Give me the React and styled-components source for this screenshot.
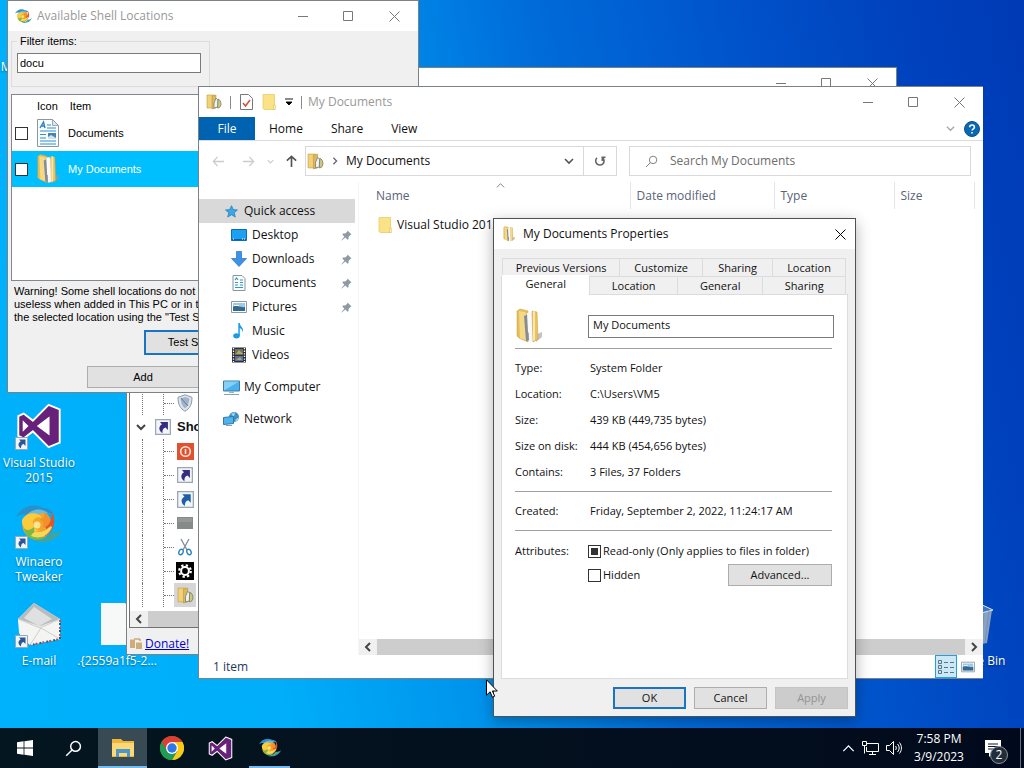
import { useEffect, useRef } from 'react';
import styled, { createGlobalStyle, css } from 'styled-components';

const GlobalStyle = createGlobalStyle`
  * {
    box-sizing: border-box;
  }
  body {
    margin: 0;
    overflow: hidden;
    font-family: 'Open Sans', 'Noto Sans', sans-serif;
    font-size: 12px;
    line-height: 16px;
    color: #111;
  }
  button, input {
    font: inherit;
    color: inherit;
    margin: 0;
    padding: 0;
  }
  button {
    border: 0;
    background: none;
  }
  ul, dl, dd, p, h2 {
    margin: 0;
    padding: 0;
    list-style: none;
  }
  svg {
    display: block;
    flex: none;
  }
`;

const Screen = styled.div`
  display: flex;
  flex-direction: column;
  height: 100vh;
  background: linear-gradient(78deg, #00b2fb 0%, #00aef9 25%, #0092ec 42%, #006cda 58%, #0052ca 76%, #0041bd 90%, #003ab4 100%);
`;

const Workspace = styled.main`
  position: relative;
  flex: 1;
  overflow: hidden;
`;

/* desktop shortcuts */

const Shortcuts = styled.div`
  display: grid;
  grid-template-rows: repeat(7, 99px);
  grid-auto-columns: 78px;
  padding-top: 6px;
`;
const Shortcut = styled.div`
  grid-row: ${p => p.$row};
  grid-column: ${p => p.$col || 1};
  display: flex;
  flex-direction: column;
  align-items: center;
  gap: 5px;
  line-height: 15px;
  color: white;
  text-align: center;
  text-shadow: 0 1px 2px rgba(0, 0, 0, .45);
  white-space: ${p => (p.$oneLine ? 'nowrap' : 'normal')};
`;
const ShortcutIcon = styled.div`
  position: relative;
  display: flex;
  justify-content: center;
  align-items: center;
  width: 48px;
  height: 48px;
`;
const LinkBadge = styled.div`
  position: absolute;
  left: 0;
  bottom: 0;
`;
const BinSlot = styled.div`
  position: absolute;
  right: 11px;
  top: 600px;
  width: 78px;
`;

/* windows */

const Window = styled.section`
  position: absolute;
  left: ${p => p.$left}px;
  top: ${p => p.$top}px;
  width: ${p => p.$width}px;
  height: ${p => p.$height}px;
  display: flex;
  flex-direction: column;
  background: ${p => p.$bg || 'white'};
  border: 1px solid ${p => p.$edge || '#7a8288'};
  border-width: ${p => p.$borders || '1px'};
  overflow: hidden;
  ${p => p.$active && 'box-shadow: 0 4px 14px rgba(0, 0, 0, .3);'}
`;
const TitleBar = styled.header`
  display: flex;
  align-items: center;
  height: 30px;
  flex: none;
  padding-left: 7px;
  background: white;
  color: ${p => (p.$active ? '#111' : '#999')};
`;
const Title = styled.h2`
  flex: 1;
  font-size: 12px;
  font-weight: normal;
  white-space: nowrap;
  padding-left: ${p => p.$gap || 6}px;
`;
const CaptionButton = styled.button`
  display: flex;
  align-items: center;
  justify-content: center;
  width: ${p => p.$width || 46}px;
  height: 30px;
`;

const ClassicBody = styled.div`
  font-family: 'Liberation Sans', Arial, sans-serif;
  font-size: 11px;
  line-height: 13px;
  color: black;
`;
const ClassicButton = styled.button`
  width: ${p => p.$width}px;
  height: ${p => p.$height || 22}px;
  background: #e1e1e1;
  border: ${p => (p.$primary ? '2px solid #1874c4' : '1px solid #adadad')};
  &:disabled {
    background: #ccc;
    border-color: #c4c4c4;
    color: #939393;
  }
`;
const Check = styled.input`
  appearance: none;
  display: grid;
  place-content: center;
  width: 13px;
  height: 13px;
  flex: none;
  background: white;
  border: 1px solid #333;
  &:indeterminate::before {
    content: '';
    width: 7px;
    height: 7px;
    background: #333;
  }
`;

/* shell locations */

const ShellBody = styled(ClassicBody)`
  display: flex;
  flex-direction: column;
  flex: 1;
  padding: 4px 3px 4px;
`;
const Filter = styled.fieldset`
  width: 199px;
  height: 52px;
  margin: 0;
  padding: 5px 5px 0;
  border: 1px solid #dcdcdc;
  legend {
    padding: 0 3px;
  }
  input {
    display: block;
    width: 184px;
    height: 20px;
    padding: 0 2px;
    border: 1px solid #7a7a7a;
    background: white;
  }
`;
const LocationList = styled.div`
  height: 187px;
  margin-top: 7px;
  border: 1px solid #828790;
  background: white;
`;
const LocationHead = styled.div`
  display: flex;
  height: 20px;
  align-items: center;
  padding: 2px 0 0 25px;
  gap: 12px;
`;
const LocationRow = styled.label`
  display: flex;
  align-items: center;
  gap: 8px;
  height: 36px;
  padding-left: 3px;
  background: ${p => (p.$selected ? '#00bfff' : 'white')};
  color: ${p => (p.$selected ? 'white' : 'black')};
`;
const Warning = styled.p`
  padding: 4px 3px 0;
  white-space: nowrap;
  span {
    display: block;
  }
`;
const TestRow = styled.div`
  display: flex;
  padding: 6px 0 0 133px;
`;
const AddRow = styled.div`
  display: flex;
  padding: 11px 0 0 76px;
`;

/* tweaker */

const Tree = styled.ul`
  display: flex;
  flex-direction: column;
  justify-content: flex-end;
  flex: 1;
  margin-left: 2px;
  padding-bottom: 4px;
  border-left: 1px solid #707070;
  background: white;
`;
const TreeItem = styled.li`
  display: flex;
  align-items: center;
  height: 24px;
  font-family: 'Liberation Sans', Arial, sans-serif;
  font-size: 13px;
  font-weight: ${p => (p.$group ? 'bold' : 'normal')};
`;
const TreeGuide = styled.span`
  display: flex;
  align-items: center;
  width: ${p => (p.$first ? 21 : 11)}px;
  height: 24px;
  margin-left: ${p => (p.$first ? 12 : 0)}px;
  border-left: 1px dotted #777;
`;
const TreeDash = styled.span`
  flex: 1;
  border-top: 1px dotted #777;
`;
const Expander = styled.button`
  display: flex;
  align-items: center;
  justify-content: center;
  width: 22px;
  height: 24px;
`;
const TreeIcon = styled.span`
  display: flex;
  align-items: center;
  justify-content: center;
  width: 22px;
  height: 24px;
  background: ${p => (p.$selected ? '#d6d6d6' : 'none')};
`;
const TreeLabel = styled.span`
  padding-left: 3px;
`;
const TreeScroll = styled.div`
  display: flex;
  height: 17px;
  margin-left: 2px;
  border-left: 1px solid #707070;
  border-bottom: 1px solid #707070;
  background: #f0f0f0;
`;
const DonateBar = styled.footer`
  display: flex;
  align-items: center;
  gap: 3px;
  height: 26px;
  padding: 6px 3px 0;
  background: #f0f0f0;
  a {
    color: #0000d0;
  }
`;

/* explorer */

const QuickTools = styled.div`
  display: flex;
  align-items: center;
  gap: 8px;
`;
const QuickTool = styled.button`
  display: flex;
`;
const Rule = styled.span`
  width: 1px;
  height: 13px;
  background: #8a8a8a;
`;
const Ribbon = styled.nav`
  display: flex;
  align-items: center;
  height: 24px;
  flex: none;
  padding-right: 3px;
  border-bottom: 1px solid #dadbdc;
`;
const RibbonTab = styled.button`
  height: 23px;
  padding: 1px 14px 0;
  ${p => p.$file && css`
    width: 56px;
    background: #0063b1;
    color: white;
  `}
`;
const RibbonEnd = styled.div`
  display: flex;
  align-items: center;
  gap: 9px;
  margin-left: auto;
`;
const NavRow = styled.div`
  display: flex;
  align-items: center;
  padding: 5px 12px 6px 4px;
`;
const NavButton = styled.button`
  display: flex;
  align-items: center;
  justify-content: center;
  width: ${p => p.$width}px;
  height: 30px;
`;
const AddressBar = styled.div`
  display: flex;
  align-items: center;
  width: 312px;
  height: 30px;
  border: 1px solid #d9d9d9;
`;
const Crumb = styled.button`
  flex: 1;
  display: flex;
  align-items: center;
  gap: 7px;
  padding-left: 1px;
`;
const Refresh = styled.button`
  display: flex;
  align-items: center;
  justify-content: center;
  width: 33px;
  height: 28px;
  margin-left: 9px;
  border-left: 1px solid #d9d9d9;
`;
const Search = styled.label`
  flex: 1;
  display: flex;
  align-items: center;
  gap: 12px;
  height: 30px;
  margin-left: 12px;
  padding-left: 15px;
  border: 1px solid #d9d9d9;
  input {
    flex: 1;
    min-width: 0;
    border: 0;
    outline: 0;
  }
  input::placeholder {
    color: #6d6d6d;
    opacity: 1;
  }
`;
const Columns = styled.div`
  display: flex;
  flex: 1;
  min-height: 0;
`;
const Sidebar = styled.ul`
  width: 160px;
  padding-top: 17px;
  border-right: 1px solid #f6f6f6;
`;
const Place = styled.li`
  display: flex;
  align-items: center;
  gap: 5px;
  height: 24px;
  margin-right: 3px;
  margin-top: ${p => (p.$spaced ? 8 : 0)}px;
  padding: 0 3px 0 ${p => (p.$nested ? 32 : 24)}px;
  background: ${p => (p.$selected ? '#d9d9d9' : 'none')};
`;
const PlaceIcon = styled.span`
  display: flex;
  justify-content: center;
  width: 16px;
`;
const PlaceName = styled.span`
  flex: 1;
  white-space: nowrap;
`;
const Pane = styled.div`
  flex: 1;
  min-width: 0;
  display: flex;
  flex-direction: column;
`;
const Files = styled.table`
  table-layout: fixed;
  border-collapse: collapse;
  width: 100%;
  th {
    height: 27px;
    padding: 0 0 0 6px;
    border-right: 1px solid #e5e5e5;
    font-weight: normal;
    text-align: left;
    color: #5a6478;
  }
  th:first-child {
    padding-left: 17px;
  }
  th:last-child {
    border: 0;
  }
  td {
    padding: 5px 0 0 18px;
  }
`;
const Col = styled.col`
  width: ${p => p.$width}px;
`;
const SortCaret = styled.div`
  position: absolute;
  left: 297px;
  top: 94px;
`;
const FileName = styled.div`
  display: flex;
  align-items: center;
  gap: 4px;
  height: 22px;
  white-space: nowrap;
`;
const ScrollBar = styled.div`
  display: flex;
  height: 16px;
  margin-top: auto;
  background: #f0f0f0;
`;
const ScrollButton = styled.button`
  display: flex;
  align-items: center;
  justify-content: center;
  width: 18px;
`;
const Thumb = styled.div`
  flex: 1;
  background: #cdcdcd;
`;
const StatusBar = styled.footer`
  display: flex;
  align-items: center;
  height: 23px;
  flex: none;
  padding: 0 4px 0 14px;
  color: #1e395b;
`;
const ViewButtons = styled.div`
  display: flex;
  margin-left: auto;
`;
const ViewButton = styled.button`
  display: flex;
  align-items: center;
  justify-content: center;
  width: 22px;
  height: 23px;
  border: 1px solid ${p => (p.$on ? '#26a0da' : 'transparent')};
  background: ${p => (p.$on ? '#cbe8f6' : 'none')};
`;

/* properties */

const DialogBody = styled.div`
  flex: 1;
  display: flex;
  flex-direction: column;
  padding: 9px 7px 7px;
  font-size: 11px;
  line-height: 16px;
`;
const TabRow = styled.div`
  display: flex;
  height: 18px;
  padding: 0 2px 0 ${p => (p.$front ? 0 : 1)}px;
`;
const Tab = styled.button`
  flex: ${p => p.$grow} 0 0;
  border: 1px solid #dcdcdc;
  border-width: 1px 1px 0 0;
  background: ${p => (p.$selected ? 'white' : '#f0f0f0')};
  &:first-child {
    border-left-width: 1px;
  }
  ${p => p.$selected && css`
    position: relative;
    height: 20px;
    margin-top: -1px;
    padding-bottom: 4px;
    border-top-color: white;
  `}
`;
const Panel = styled.div`
  flex: 1;
  margin-bottom: 8px;
  padding: 11px 15px 0 13px;
  border: 1px solid #dcdcdc;
  background: white;
`;
const NameRow = styled.div`
  display: grid;
  grid-template-columns: 73px 1fr;
  align-items: center;
  height: 42px;
  margin-right: -2px;
  padding-bottom: 2px;
  input {
    height: 23px;
    padding: 0 4px 3px;
    border: 1px solid #7a7a7a;
  }
`;
const Details = styled.dl`
  display: grid;
  grid-template-columns: 75px 1fr;
  grid-auto-rows: 26px;
  align-items: center;
  padding: 6px 0;
  border-top: 1px solid #a0a0a0;
`;
const Attributes = styled.div`
  display: grid;
  grid-template-columns: 73px 1fr;
  padding-top: 9px;
  border-top: 1px solid #a0a0a0;
  line-height: 22px;
`;
const Options = styled.div`
  display: grid;
  grid-auto-rows: 22px;
  gap: 2px;
`;
const Option = styled.label`
  display: flex;
  align-items: center;
  gap: 2px;
  white-space: nowrap;
`;
const OptionRow = styled.div`
  display: flex;
  align-items: center;
  justify-content: space-between;
`;
const AdvancedButton = styled(ClassicButton)`
  line-height: 16px;
`;
const DialogButtons = styled.div`
  display: flex;
  justify-content: flex-end;
  gap: 8px;
`;

/* taskbar */

const Taskbar = styled.footer`
  display: flex;
  height: 40px;
  flex: none;
  background: linear-gradient(90deg, #04161f, #030f1e 60%, #010a1c);
  color: white;
`;
const TaskButton = styled.button`
  display: flex;
  align-items: center;
  justify-content: center;
  width: 49px;
  background: ${p => (p.$active ? '#384a54' : 'none')};
  border-top: 2px solid transparent;
  border-bottom: 2px solid ${p => (p.$open ? '#76b9ed' : 'transparent')};
  ${p => p.$open && !p.$active && 'width: 41px; margin-left: 4px;'}
`;
const Tray = styled.div`
  display: flex;
  align-items: center;
  gap: 7px;
  margin-left: auto;
`;
const Clock = styled.time`
  width: 60px;
  line-height: 18px;
  text-align: center;
  span {
    display: block;
  }
`;
const Notices = styled.button`
  position: relative;
  display: flex;
  align-items: flex-start;
  width: 34px;
  height: 40px;
  padding: 12px 0 0 6px;
  margin-left: 3px;
`;
const NoticeCount = styled.span`
  position: absolute;
  right: 5px;
  bottom: 4px;
  width: 18px;
  height: 18px;
  border: 1px solid #8a949c;
  border-radius: 50%;
  background: #232d3a;
  text-align: center;
  line-height: 16px;
`;
const PeekEdge = styled.span`
  align-self: stretch;
  width: 4px;
  border-left: 1px solid #66707c;
`;
const Pointer = styled.div`
  position: absolute;
  left: 486px;
  top: 679px;
`;

/* drawings */

const Chevron = ({ dir = 'down', size = 10, color = '#444', weight = 1.6 }) => {
  const shapes = { down: 'M1 3l4 4 4-4', up: 'M1 7l4-4 4 4', left: 'M7 1L3 5l4 4', right: 'M3 1l4 4-4 4' };
  return (
    <svg width={size} height={size} viewBox="0 0 10 10" fill="none" stroke={color} strokeWidth={weight}>
      <path d={shapes[dir]} />
    </svg>
  );
};

const Arrow = ({ dir = 'left', color = '#ccc', weight = 1.4, size = 13 }) => {
  const turn = { left: 0, up: 90, right: 180 }[dir];
  return (
    <svg width={size} height={size} viewBox="0 0 14 14" fill="none" stroke={color} strokeWidth={weight}>
      <path transform={`rotate(${turn} 7 7)`} d="M13 7H1.5M6 2L1.5 7 6 12" />
    </svg>
  );
};

const Folder = ({ size = 16 }) => (
  <svg width={size} height={size} viewBox="0 0 16 16">
    <path d="M2 .5h11.500v15H3l-1-1z" fill="#fae386" stroke="#e6c65c" strokeWidth=".7" />
    <path d="M12.500 11h1.900v4.500h-1.900z" fill="#fdf2bd" stroke="#d8b44a" strokeWidth=".5" />
  </svg>
);

const DocFolder = ({ size = 16 }) => (
  <svg width={size} height={size} viewBox="0 0 16 16">
    <path d="M1 1h7v13H1z" fill="#f1d27a" stroke="#c69b35" strokeWidth=".6" />
    <path d="M6 2l4-1v13l-4 1z" fill="#ddb95e" stroke="#b78d2e" strokeWidth=".5" />
    <path d="M8 9l2-5 2 2v7l-4 1z" fill="#eef2f3" stroke="#66757c" strokeWidth=".7" />
    <path d="M12 5c2 .5 3 3 3 5s-1 4-3.500 4z" fill="#cfc684" stroke="#7a8259" strokeWidth=".8" />
  </svg>
);

const OpenFolder = ({ width = 28, height = 36 }) => (
  <svg width={width} height={height} viewBox="0 0 28 36">
    <path d="M20 27l7-3v5l-6 5z" fill="#9b9b9b" opacity=".6" />
    <path d="M2 3l3-2 8 2v31l-9-4-2-2z" fill="#e6bf5b" stroke="#c79b3b" strokeWidth=".5" />
    <path d="M4 3l7 1.500v28L5 30z" fill="#f4d988" />
    <path d="M9 8l7-3v27l-5 1z" fill="#868c93" />
    <path d="M13 6l5-1 1 28-5 1z" fill="#f5f7f8" />
    <path d="M12 5l4-1v23l-3-3z" fill="#fafafa" />
    <path d="M17 3l5 1 1 27-5 3z" fill="#e9c261" stroke="#c79b3b" strokeWidth=".5" />
    <path d="M18 3l2 .5V32l-2 1z" fill="#fae7a8" />
  </svg>
);

const TextDoc = ({ width = 22, height = 28 }) => (
  <svg width={width} height={height} viewBox="0 0 22 28">
    <path d="M.5.5h15l6 6v21H.5z" fill="#fafcfd" stroke="#8a979e" />
    <path d="M15.5.5v6h6z" fill="#dfe6ea" stroke="#8a979e" strokeWidth=".8" />
    <path d="M3 9l3.500-6L8 9M4 7h4" fill="none" stroke="#2a82c9" strokeWidth="1.400" />
    <path d="M10 6h4M10 9h9M3 12h16M3 19h6M3 22h16M3 25h16M3 15.500h6" stroke="#2a8fd6" strokeWidth="1.200" />
    <path d="M11 14h8v6h-8z" fill="#4c82b0" />
    <path d="M11 18l3-2 5 3v1h-8z" fill="#cfe3ef" />
  </svg>
);

const SmallDoc = () => (
  <svg width="14" height="16" viewBox="0 0 14 16">
    <path d="M1 .5h9l3 3v12H1z" fill="#f9fcfd" stroke="#8797a0" />
    <path d="M3 5l1.500-2L6 5M3 7.500h3M3 10h3M3 12.500h8M8 5h3M8 7.500h3M8 10h3" fill="none" stroke="#3c93bb" strokeWidth="1.200" />
  </svg>
);

const Picture = ({ size = 16 }) => (
  <svg width={size} height={size} viewBox="0 0 16 16">
    <path d="M.5 2.500h15v11H.5z" fill="white" stroke="#8c9aa3" />
    <path d="M2 4h12v8H2z" fill="#9ccbea" />
    <path d="M2 8c4-3 6 1 12 0v4H2z" fill="#35698f" />
    <path d="M3 6h5v1H3z" fill="white" />
  </svg>
);

const Screenlet = () => (
  <svg width="16" height="16" viewBox="0 0 16 16">
    <path d="M.5 2.500h15v11H.5z" fill="#1ba1f3" stroke="#0f6cb4" />
    <path d="M1 12h14v1H1z" fill="#0b5fa5" />
    <path d="M2 12h1M11 12h1M13 12h1" stroke="white" />
  </svg>
);

const DownArrow = () => (
  <svg width="16" height="16" viewBox="0 0 16 16">
    <path d="M5.500.5h5v7h5L8 15.500.5 7.500h5z" fill="#3c92e4" stroke="#2a6fbd" strokeWidth=".7" />
  </svg>
);

const Note = () => (
  <svg width="16" height="16" viewBox="0 0 16 16">
    <ellipse cx="5.500" cy="12.800" rx="3.300" ry="2.600" fill="#1b9be6" />
    <path d="M7.300 0h1.500c0 4 4.500 4 3 9.500-.3-2.500-1.500-3.800-3-4.500v8H7.300z" fill="#1b9be6" />
  </svg>
);

const Film = () => (
  <svg width="16" height="16" viewBox="0 0 16 16">
    <path d="M1 .5h14v15H1z" fill="#2c2f33" />
    <path d="M4 2h8v6H4z" fill="#6e7361" />
    <path d="M4 9h8v5H4z" fill="#5b6fa8" />
    <path d="M5 7l3-4 4 4zM5 13l4-3 2 3z" fill="#b8a760" />
    <path d="M2.500 1v14M13.500 1v14" stroke="white" strokeWidth="1.300" strokeDasharray="1.300 1.300" />
  </svg>
);

const Monitor = ({ size = 17 }) => (
  <svg width={size} height={size} viewBox="0 0 17 16">
    <path d="M.5 1.500h16v10H.5z" fill="#47b2ee" stroke="#3a7ca8" />
    <path d="M1 2h15L1 11z" fill="#86d0f8" />
    <path d="M6 12h5v1.500H6z" fill="#9db3bf" />
    <path d="M1 15h15" stroke="#8ca0ab" />
  </svg>
);

const NetworkIcon = () => (
  <svg width="17" height="16" viewBox="0 0 17 16">
    <circle cx="11" cy="6" r="5" fill="#3d8fc4" />
    <path d="M8 3l4-2-1 5zM12 9l4-3-2 5z" fill="#9ed5f2" />
    <path d="M.5 6.500l10-1v7l-10 1z" fill="#4fb4ec" stroke="#2f78a8" />
    <path d="M3 14.500h6" stroke="#8ca0ab" />
  </svg>
);

const Star = () => (
  <svg width="13" height="13" viewBox="0 0 15 15">
    <path d="M7.500.8l2 4.500 4.900.4-3.700 3.300 1.200 4.900-4.400-2.600-4.300 2.600 1.100-4.900L.6 5.700l4.900-.4z" fill="#3aa7e8" stroke="#2377b4" strokeWidth=".8" />
  </svg>
);

const Pin = () => (
  <svg width="11" height="11" viewBox="0 0 11 11">
    <path d="M6.500.5l4 4-1.200.4-1.800 2 .1 2-1 .9-2.300-2.300L.8 10.500l-.4-.3 3-3.600L1.200 4.500l1-1 2 .1 2-1.800z" fill="#8f9aa4" />
  </svg>
);

const MagnifyIcon = ({ size = 14, color = '#777', weight = 1 }) => (
  <svg width={size} height={size} viewBox="0 0 14 14" fill="none" stroke={color} strokeWidth={weight}>
    <circle cx="8.700" cy="5.300" r="4" />
    <path d="M5.800 8.200L1 13" />
  </svg>
);

const Swirl = ({ size = 40 }) => (
  <svg width={size} height={size} viewBox="0 0 46 40">
    <path d="M0 12C5 2 17-3 27 3c6 0 9 3 10 6-8-3-16-1-20 6C12 8 6 8 0 12z" fill="#2a8fca" />
    <path d="M46 24c-4 11-17 16-29 12 9 0 15-3 18-8 5 0 8-1 11-4z" fill="#43a49b" />
    <circle cx="21" cy="20" r="14.500" fill="#f2a52c" />
    <path d="M9 12C15 3 27 2 33 9c-8-3-16 1-16 8-3-4-6-5-8-5z" fill="#6bbbdc" />
    <path d="M6 15c4-8 16-9 20-2-5-2-10 1-9 6 0 4 3 6 7 6-9 5-19-1-18-10z" fill="#fbcb3c" />
    <path d="M8 24c2 10 13 14 22 8-9 1-14-4-11-11-4 4-7 5-11 3z" fill="#7cb843" />
    <path d="M35 6c6 8 4 20-7 26 4-5 3-10-1-12 7 0 10-6 8-14z" fill="#e0562b" />
    <path d="M28 8c8 2 9 12-1 15 2-3 1-7-4-9 4 0 6-2 5-6z" fill="#f3902b" />
    <path d="M15 31c9 4 18-1 21-9-2-3-5 5-12 5-4 0-7-1-9 4z" fill="#f6d95a" />
    <circle cx="21" cy="20" r="3.500" fill="#fbe68d" />
  </svg>
);

const StudioLogo = ({ size = 46 }) => (
  <svg width={size} height={size} viewBox="0 0 24 24">
    <path d="M17 1l5.800 2.300v17.400L17 23l-8.200-8.200L4 18.500l-2.800-1.300V6.800L4 5.500l4.800 3.700zM17 8l-5.300 4 5.300 4z" fill="#68217a" stroke="white" strokeWidth="1" />
    <path d="M17 7.700v8.600L11.300 12zM3.500 9v6l3-3z" fill="white" />
  </svg>
);

const Envelope = () => (
  <svg width="46" height="46" viewBox="0 0 46 46">
    <path d="M2 18L18 2l26 16v20L14 44 3 32z" fill="#e9e9e8" />
    <path d="M2 18L18 2l26 16-20 7z" fill="#b9bcbe" />
    <path d="M8 17L18 6l18 12-13 7z" fill="#dfe0e0" />
    <path d="M2 18l22 9 20-9v20L14 44 4 34z" fill="#f4f4f3" />
    <path d="M2 18l22 9 20-9M14 44l11-17 19 11" fill="none" stroke="#cfcfcf" />
    <path d="M44 19v19L14 44" fill="none" stroke="#c8503f" strokeWidth="2" strokeDasharray="2 5" />
    <path d="M44 22v16L17 43.500" fill="none" stroke="#40557d" strokeWidth="2" strokeDasharray="2 5" />
  </svg>
);

const LinkArrow = ({ size = 13, color = '#2b579a' }) => (
  <svg width={size} height={size} viewBox="0 0 13 13">
    <path d="M.5.5h12v12H.5z" fill="#f2f5f8" stroke="#9aa7b4" />
    <path d="M4 2.500h6.500V9L8.600 7C6.500 7.500 6 9 6 11.500 2.500 9 3 6 5.700 4.300z" fill={color} />
  </svg>
);

const Bin = () => (
  <svg width="44" height="46" viewBox="0 0 44 46">
    <path d="M4 6l20-5 16 8-5 33-16 3-12-5z" fill="#9fb2c6" opacity=".85" />
    <path d="M4 6l20-5 17 8-16 4z" fill="#3f74bd" stroke="#dbe6ef" />
    <path d="M25 13l-3 32M32 12l-3 31M37 10l-4 32" stroke="#7d90a4" />
  </svg>
);

const Power = () => (
  <svg width="17" height="17" viewBox="0 0 17 17">
    <path d="M0 0h17v17H0z" fill="#e0512f" />
    <circle cx="8.500" cy="8.500" r="4.800" fill="none" stroke="#fbe5dc" strokeWidth="1.600" />
    <path d="M8.500 6v5" stroke="#fbe5dc" strokeWidth="1.600" />
  </svg>
);

const Shield = () => (
  <svg width="16" height="18" viewBox="0 0 16 18">
    <path d="M8 .8l7 2.500c0 7-2 11-7 14-5-3-7-7-7-14z" fill="#dde5ec" stroke="#8b98a6" />
    <path d="M8 3l4.500 1.600C12 9 11 12 8 14.500 5 12 4 9 3.500 4.600z" fill="#9fb4ca" />
    <path d="M4 4l7 8" stroke="#5d7896" />
  </svg>
);

const Scissors = () => (
  <svg width="16" height="18" viewBox="0 0 16 18" fill="none">
    <path d="M4 1l6 11M12 1L6 12" stroke="#7f8b94" strokeWidth="1.300" />
    <ellipse cx="4" cy="14" rx="2" ry="2.800" stroke="#2a83bb" strokeWidth="1.400" transform="rotate(25 4 14)" />
    <ellipse cx="12" cy="14" rx="2" ry="2.800" stroke="#2a83bb" strokeWidth="1.400" transform="rotate(-25 12 14)" />
  </svg>
);

const Gear = () => (
  <svg width="18" height="18" viewBox="0 0 18 18">
    <path d="M0 0h18v18H0z" fill="black" />
    <circle cx="9" cy="9" r="5.800" fill="none" stroke="white" strokeWidth="2.200" strokeDasharray="2.280 2.280" />
    <circle cx="9" cy="9" r="3.900" fill="none" stroke="white" strokeWidth="2" />
  </svg>
);

const Slab = () => (
  <svg width="16" height="12" viewBox="0 0 16 12">
    <path d="M0 0h16v12H0z" fill="#868a88" />
    <path d="M1 1h14v4H1z" fill="#949896" />
  </svg>
);

const Coins = () => (
  <svg width="12" height="12" viewBox="0 0 12 12">
    <path d="M0 1h5v9H0zM6 4h6v7H6z" fill="#e8d2a6" />
    <path d="M0 3h5M0 5h5M0 7h5M0 9h5M6 6h6M6 8h6M6 10h6M4 1h6v2" fill="none" stroke="#b08a55" />
  </svg>
);

const Chrome = () => (
  <svg width="24" height="24" viewBox="0 0 24 24">
    <circle cx="12" cy="12" r="12" fill="#1f9d55" />
    <path d="M12 12L1.600 6A12 12 0 0 1 22.400 6z" fill="#df3e30" />
    <path d="M22.400 6A12 12 0 0 1 12 24l5.200-9L12 6z" fill="#fbc916" />
    <path d="M1.600 6L6.800 15 12 12V6z" fill="#df3e30" />
    <path d="M1.600 6A12 12 0 0 0 12 24l5.200-9H6.800z" fill="#1f9d55" />
    <circle cx="12" cy="12" r="6" fill="white" />
    <circle cx="12" cy="12" r="4.700" fill="#3277e8" />
  </svg>
);

const ExplorerLogo = () => (
  <svg width="22" height="18" viewBox="0 0 22 18">
    <path d="M0 0h9l2 2h11v16H0z" fill="#eeb63c" />
    <path d="M0 4h22v13H0z" fill="#fdd976" />
    <path d="M4 18v-8h14v8h-3v-4H7v4z" fill="#4a96cd" />
    <path d="M7 14h8v3H7z" fill="#fdd976" />
  </svg>
);

const StartLogo = () => (
  <svg width="16" height="16" viewBox="0 0 16 16">
    <path d="M0 2.200l6.600-.9v6.300H0zM7.400 1.200L16 0v7.600H7.400zM0 8.400h6.600v6.300L0 13.800zM7.400 8.400H16V16l-8.600-1.200z" fill="white" />
  </svg>
);

/* reusable bits */

const Cross = ({ color = 'black' }) => (
  <svg width="11" height="11" viewBox="0 0 11 11"><path d="M.5.5l10 10M10.500.5l-10 10" stroke={color} /></svg>
);

const CaptionButtons = () => (
  <>
    <CaptionButton aria-label="Minimize">
      <svg width="10" height="10" viewBox="0 0 10 10"><path d="M0 5.500h10" stroke="#777" /></svg>
    </CaptionButton>
    <CaptionButton aria-label="Maximize" $width={44}>
      <svg width="10" height="10" viewBox="0 0 10 10"><path d="M.5.5h9v9h-9z" fill="none" stroke="#777" /></svg>
    </CaptionButton>
    <CaptionButton aria-label="Close" $width={48}>
      <Cross color="#777" />
    </CaptionButton>
  </>
);

const MixedCheck = () => {
  const box = useRef(null);
  useEffect(() => {
    box.current.indeterminate = true;
  }, []);
  return <Check type="checkbox" ref={box} />;
};

const treeItems = [
  { id: 'power', icon: <Power /> },
  { id: 'arrow', icon: <LinkArrow size={16} color="#352d80" /> },
  { id: 'arrow-edit', icon: <LinkArrow size={17} color="#1d5fa6" /> },
  { id: 'slab', icon: <Slab /> },
  { id: 'cut', icon: <Scissors /> },
  { id: 'gear', icon: <Gear /> },
  { id: 'folders', icon: <DocFolder size={17} />, selected: true },
];

const places = [
  { name: 'Quick access', icon: <Star />, selected: true },
  { name: 'Desktop', icon: <Screenlet />, nested: true, pinned: true },
  { name: 'Downloads', icon: <DownArrow />, nested: true, pinned: true },
  { name: 'Documents', icon: <SmallDoc />, nested: true, pinned: true },
  { name: 'Pictures', icon: <Picture />, nested: true, pinned: true },
  { name: 'Music', icon: <Note />, nested: true },
  { name: 'Videos', icon: <Film />, nested: true },
  { name: 'My Computer', icon: <Monitor />, spaced: true },
  { name: 'Network', icon: <NetworkIcon />, spaced: true },
];

const details = [
  ['Type:', 'System Folder'],
  ['Location:', 'C:\\Users\\VM5'],
  ['Size:', '439 KB (449,735 bytes)'],
  ['Size on disk:', '444 KB (454,656 bytes)'],
  ['Contains:', '3 Files, 37 Folders'],
];

const TreeLeaf = ({ icon, selected }) => (
  <TreeItem>
    <TreeGuide $first />
    <TreeGuide><TreeDash /></TreeGuide>
    <TreeIcon $selected={selected}>{icon}</TreeIcon>
  </TreeItem>
);

const TweakerWindow = () => (
  <Window $left={126} $top={67} $width={771} $height={588}>
    <TitleBar>
      <Title />
      <CaptionButtons />
    </TitleBar>
    <Tree>
      <TreeLeaf icon={<Shield />} />
      <TreeItem $group>
        <Expander aria-label="Collapse"><Chevron weight={2} /></Expander>
        <TreeIcon><LinkArrow size={16} color="#352d80" /></TreeIcon>
        <TreeLabel>Shortcuts</TreeLabel>
      </TreeItem>
      {treeItems.map(item => (
        <TreeLeaf key={item.id} icon={item.icon} selected={item.selected} />
      ))}
    </Tree>
    <TreeScroll>
      <ScrollButton aria-label="Scroll left"><Chevron dir="left" weight={2} /></ScrollButton>
      <Thumb />
    </TreeScroll>
    <DonateBar>
      <Coins />
      <a href="#donate">Donate!</a>
    </DonateBar>
  </Window>
);

const ShellWindow = () => (
  <Window $left={7} $top={0} $width={412} $height={393} $bg="#f0f0f0">
    <TitleBar>
      <Swirl size={17} />
      <Title $gap={5}>Available Shell Locations</Title>
      <CaptionButtons />
    </TitleBar>
    <ShellBody>
      <Filter>
        <legend><label htmlFor="filter">Filter items:</label></legend>
        <input id="filter" type="text" defaultValue="docu" />
      </Filter>
      <LocationList>
        <LocationHead>
          <span>Icon</span>
          <span>Item</span>
        </LocationHead>
        <LocationRow>
          <Check type="checkbox" />
          <TextDoc width={24} />
          Documents
        </LocationRow>
        <LocationRow $selected>
          <Check type="checkbox" />
          <OpenFolder width={24} height={32} />
          My Documents
        </LocationRow>
      </LocationList>
      <Warning>
        <span>Warning! Some shell locations do not work and are</span>
        <span>useless when added in This PC or in the</span>
        <span>the selected location using the "Test Shell Location"</span>
      </Warning>
      <TestRow>
        <ClassicButton $primary $width={140} $height={25}>Test Shell Location</ClassicButton>
      </TestRow>
      <AddRow>
        <ClassicButton $width={112}>Add</ClassicButton>
      </AddRow>
    </ShellBody>
  </Window>
);

const ExplorerWindow = () => (
  <Window $left={198} $top={86} $width={785} $height={593} $borders="1px 0 1px 1px">
    <TitleBar>
      <QuickTools>
        <DocFolder />
        <Rule />
        <QuickTool aria-label="Properties">
          <svg width="14" height="16" viewBox="0 0 14 16">
            <path d="M1.500.5h8l4 4v11h-12z" fill="white" stroke="#777" />
            <path d="M4 9l2.500 3L11 6" fill="none" stroke="#c8552f" strokeWidth="1.500" />
          </svg>
        </QuickTool>
        <QuickTool aria-label="New folder"><Folder /></QuickTool>
        <QuickTool aria-label="Customize toolbar">
          <svg width="8" height="8" viewBox="0 0 8 8"><path d="M0 1h8M1 4h6L4 7z" stroke="black" strokeWidth=".9" /></svg>
        </QuickTool>
        <Rule />
      </QuickTools>
      <Title>My Documents</Title>
      <CaptionButtons />
    </TitleBar>
    <Ribbon>
      <RibbonTab $file>File</RibbonTab>
      <RibbonTab>Home</RibbonTab>
      <RibbonTab>Share</RibbonTab>
      <RibbonTab>View</RibbonTab>
      <RibbonEnd>
        <Chevron color="#aaa" size={9} />
        <svg width="16" height="16" viewBox="0 0 16 16">
          <circle cx="8" cy="8" r="7.500" fill="#0968b4" stroke="#0a4f8c" />
          <path d="M5.700 6.200c0-3 4.700-3 4.700 0 0 1.600-2.300 1.700-2.300 3.400M8 11v1.600" fill="none" stroke="white" strokeWidth="1.600" />
        </svg>
      </RibbonEnd>
    </Ribbon>
    <NavRow>
      <NavButton $width={30} aria-label="Back"><Arrow /></NavButton>
      <NavButton $width={30} aria-label="Forward"><Arrow dir="right" /></NavButton>
      <NavButton $width={14} aria-label="Recent"><Chevron color="#ccc" size={7} /></NavButton>
      <NavButton $width={28} aria-label="Up"><Arrow dir="up" color="#555" weight={1.8} /></NavButton>
      <AddressBar>
        <Crumb>
          <DocFolder size={17} />
          <Chevron dir="right" size={8} color="#666" />
          My Documents
        </Crumb>
        <Chevron color="#555" />
        <Refresh aria-label="Refresh">
          <svg width="12" height="12" viewBox="0 0 12 12" fill="none" stroke="#666" strokeWidth="1.600">
            <path d="M3 2.800a4.200 4.200 0 1 0 5.500-.2M8.300 6V2.300h3.200" />
          </svg>
        </Refresh>
      </AddressBar>
      <Search>
        <MagnifyIcon size={13} />
        <input type="search" aria-label="Search" placeholder="Search My Documents" />
      </Search>
    </NavRow>
    <Columns>
      <Sidebar>
        {places.map(place => (
          <Place key={place.name} $selected={place.selected} $nested={place.nested} $spaced={place.spaced}>
            <PlaceIcon>{place.icon}</PlaceIcon>
            <PlaceName>{place.name}</PlaceName>
            {place.pinned && <Pin />}
          </Place>
        ))}
      </Sidebar>
      <Pane>
        <Files>
          <colgroup>
            <Col $width={271} />
            <Col $width={144} />
            <Col $width={120} />
            <Col $width={80} />
            <col />
          </colgroup>
          <thead>
            <tr>
              <th>Name</th>
              <th>Date modified</th>
              <th>Type</th>
              <th>Size</th>
              <th aria-hidden="true" />
            </tr>
          </thead>
          <tbody>
            <tr>
              <td colSpan="5">
                <FileName><Folder />Visual Studio 2015</FileName>
              </td>
            </tr>
          </tbody>
        </Files>
        <ScrollBar>
          <ScrollButton aria-label="Scroll left"><Chevron dir="left" weight={2} /></ScrollButton>
          <Thumb />
          <ScrollButton aria-label="Scroll right"><Chevron dir="right" weight={2} /></ScrollButton>
        </ScrollBar>
      </Pane>
    </Columns>
    <SortCaret><Chevron dir="up" size={9} color="#777" weight={1} /></SortCaret>
    <StatusBar>
      1 item
      <ViewButtons>
        <ViewButton $on aria-label="Details view">
          <svg width="16" height="14" viewBox="0 0 16 14" fill="none" stroke="#5f7480">
            <path d="M.5.5h3v3h-3zM.5 5.500h3v3h-3zM.5 10.500h3v3h-3zM6 2.500h4M6 7.500h4M6 12.500h4M12 2.500h4M12 7.500h4M12 12.500h4" />
          </svg>
        </ViewButton>
        <ViewButton aria-label="Thumbnail view"><Picture size={14} /></ViewButton>
      </ViewButtons>
    </StatusBar>
  </Window>
);

const PropertiesDialog = () => (
  <Window $left={493} $top={218} $width={363} $height={499} $bg="#f0f0f0" $edge="#4c5358" $active>
    <TitleBar $active>
      <OpenFolder width={16} height={16} />
      <Title>My Documents Properties</Title>
      <CaptionButton aria-label="Close" $width={30}><Cross /></CaptionButton>
    </TitleBar>
    <DialogBody>
      <TabRow>
        <Tab $grow={118}>Previous Versions</Tab>
        <Tab $grow={83}>Customize</Tab>
        <Tab $grow={70}>Sharing</Tab>
        <Tab $grow={73}>Location</Tab>
      </TabRow>
      <TabRow $front>
        <Tab $grow={89} $selected>General</Tab>
        <Tab $grow={88}>Location</Tab>
        <Tab $grow={86}>General</Tab>
        <Tab $grow={83}>Sharing</Tab>
      </TabRow>
      <Panel>
        <NameRow>
          <OpenFolder />
          <input type="text" aria-label="Folder name" defaultValue="My Documents" />
        </NameRow>
        <Details>
          {details.map(([label, value]) => [
            <dt key={label}>{label}</dt>,
            <dd key={value}>{value}</dd>,
          ])}
        </Details>
        <Details>
          <dt>Created:</dt>
          <dd>Friday, September 2, 2022, 11:24:17 AM</dd>
        </Details>
        <Attributes>
          <span>Attributes:</span>
          <Options>
            <Option><MixedCheck />Read-only (Only applies to files in folder)</Option>
            <OptionRow>
              <Option><Check type="checkbox" />Hidden</Option>
              <AdvancedButton $width={104}>Advanced...</AdvancedButton>
            </OptionRow>
          </Options>
        </Attributes>
      </Panel>
      <DialogButtons>
        <ClassicButton $primary $width={73}>OK</ClassicButton>
        <ClassicButton $width={73}>Cancel</ClassicButton>
        <ClassicButton $width={73} disabled>Apply</ClassicButton>
      </DialogButtons>
    </DialogBody>
  </Window>
);

export default function App() {
  return (
    <Screen>
      <GlobalStyle />
      <Workspace>
        <Shortcuts>
          <Shortcut $row={1}>
            <ShortcutIcon />
            My Computer
          </Shortcut>
          <Shortcut $row={3}>
            <ShortcutIcon />
            Documents
          </Shortcut>
          <Shortcut $row={5}>
            <ShortcutIcon>
              <StudioLogo />
              <LinkBadge><LinkArrow /></LinkBadge>
            </ShortcutIcon>
            Visual Studio 2015
          </Shortcut>
          <Shortcut $row={6}>
            <ShortcutIcon>
              <Swirl size={46} />
              <LinkBadge><LinkArrow /></LinkBadge>
            </ShortcutIcon>
            Winaero Tweaker
          </Shortcut>
          <Shortcut $row={7}>
            <ShortcutIcon>
              <Envelope />
              <LinkBadge><LinkArrow /></LinkBadge>
            </ShortcutIcon>
            E-mail
          </Shortcut>
          <Shortcut $row={7} $col={2} $oneLine>
            <ShortcutIcon>
              <svg width="32" height="42" viewBox="0 0 32 42"><path d="M0 0h24l8 8v34H0z" fill="#f7f8f8" /></svg>
            </ShortcutIcon>
            {'.{2559a1f5-2...'}
          </Shortcut>
        </Shortcuts>
        <BinSlot>
          <Shortcut>
            <ShortcutIcon><Bin /></ShortcutIcon>
            Recycle Bin
          </Shortcut>
        </BinSlot>
        <TweakerWindow />
        <ShellWindow />
        <ExplorerWindow />
        <PropertiesDialog />
        <Pointer>
          <svg width="12" height="19" viewBox="0 0 12 19">
            <path d="M.5.800v15.400l3.600-3.400 2.300 5.400 2.300-1-2.300-5.200h4.900z" fill="white" stroke="black" />
          </svg>
        </Pointer>
      </Workspace>
      <Taskbar>
        <TaskButton aria-label="Start"><StartLogo /></TaskButton>
        <TaskButton aria-label="Search"><MagnifyIcon size={17} color="white" weight={1.2} /></TaskButton>
        <TaskButton $active $open aria-label="File Explorer"><ExplorerLogo /></TaskButton>
        <TaskButton aria-label="Google Chrome"><Chrome /></TaskButton>
        <TaskButton aria-label="Visual Studio"><StudioLogo size={25} /></TaskButton>
        <TaskButton $open aria-label="Winaero Tweaker"><Swirl size={22} /></TaskButton>
        <Tray>
          <Chevron dir="up" size={13} color="white" weight={1} />
          <svg width="17" height="15" viewBox="0 0 17 15" fill="none" stroke="white">
            <path d="M5 2.500h11.500v8H4.500V6M10.500 10.500v3M7 13.500h7M.5.500h4v4h-4zM2.500 4.500v8" />
          </svg>
          <svg width="16" height="14" viewBox="0 0 16 14" fill="none" stroke="white">
            <path d="M.5 4.500h3l4-4v13l-4-4h-3zM9.500 5c1 1 1 3 0 4M11.500 3c2.200 2.500 2.200 5.500 0 8M13.500 1.500c2.600 3.500 2.600 7.500 0 11" />
          </svg>
          <Clock>
            <span>7:58 PM</span>
            <span>3/9/2023</span>
          </Clock>
          <Notices aria-label="Notifications">
            <svg width="16" height="17" viewBox="0 0 16 17">
              <path d="M0 0h16v13H8l-4 4v-4H0z" fill="white" />
              <path d="M3 4h10M3 6.500h10M3 9h7" stroke="#0a1626" />
            </svg>
            <NoticeCount>2</NoticeCount>
          </Notices>
          <PeekEdge />
        </Tray>
      </Taskbar>
    </Screen>
  );
}
